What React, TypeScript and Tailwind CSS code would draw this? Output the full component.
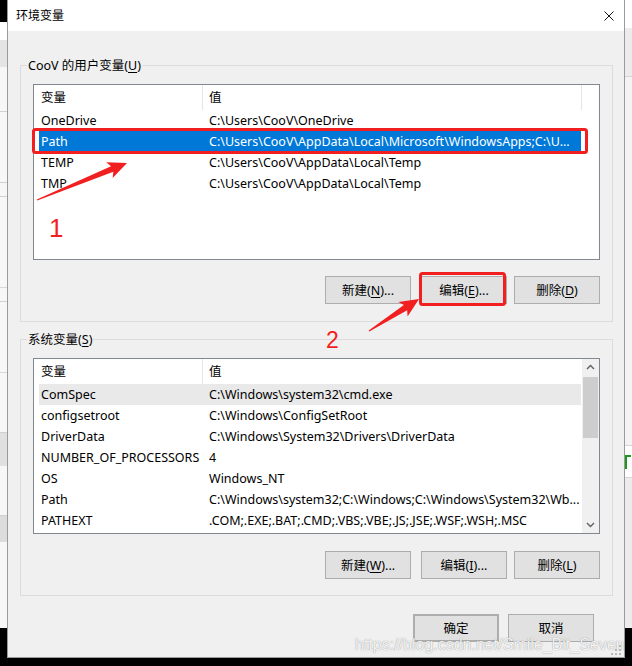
import React from 'react'

type Row = { name: string; value: string }

const USER_ROWS: Row[] = [
  { name: 'OneDrive', value: 'C:\\Users\\CooV\\OneDrive' },
  { name: 'Path', value: 'C:\\Users\\CooV\\AppData\\Local\\Microsoft\\WindowsApps;C:\\U...' },
  { name: 'TEMP', value: 'C:\\Users\\CooV\\AppData\\Local\\Temp' },
  { name: 'TMP', value: 'C:\\Users\\CooV\\AppData\\Local\\Temp' },
]

const SYSTEM_ROWS: Row[] = [
  { name: 'ComSpec', value: 'C:\\Windows\\system32\\cmd.exe' },
  { name: 'configsetroot', value: 'C:\\Windows\\ConfigSetRoot' },
  { name: 'DriverData', value: 'C:\\Windows\\System32\\Drivers\\DriverData' },
  { name: 'NUMBER_OF_PROCESSORS', value: '4' },
  { name: 'OS', value: 'Windows_NT' },
  { name: 'Path', value: 'C:\\Windows\\system32;C:\\Windows;C:\\Windows\\System32\\Wb...' },
  { name: 'PATHEXT', value: '.COM;.EXE;.BAT;.CMD;.VBS;.VBE;.JS;.JSE;.WSF;.WSH;.MSC' },
]

const RED = '#f11f1f'

function U({ c }: { c: string }) {
  return <span className="underline underline-offset-[2px]">{c}</span>
}

function Btn({ children, className = '' }: { children: React.ReactNode; className?: string }) {
  return (
    <div
      className={`flex h-[28px] w-[86px] items-center justify-center border border-[#adadad] bg-[#e1e1e1] ${className}`}
    >
      {children}
    </div>
  )
}

function Header({ filler }: { filler: boolean }) {
  return (
    <div className="flex h-[25px] bg-white">
      <div className="flex w-[169px] items-center border-r border-[#e5e5e5] pl-[7px]">变量</div>
      <div className={`flex w-[379px] items-center pl-[6px] ${filler ? 'border-r border-[#e5e5e5]' : ''}`}>值</div>
    </div>
  )
}

function Rows({ rows, selected, hovered }: { rows: Row[]; selected?: number; hovered?: number }) {
  return (
    <div className="ml-[5px] w-[542px]">
      {rows.map((r, i) => (
        <div
          key={r.name + i}
          className={`flex h-[21px] items-center whitespace-nowrap ${
            i === selected ? 'bg-[#0078d7] text-white' : i === hovered ? 'bg-[#e9e9e9]' : ''
          }`}
        >
          <div className="w-[170px] overflow-hidden pl-[2px]">{r.name}</div>
          <div className="flex-1 overflow-hidden">{r.value}</div>
        </div>
      ))}
    </div>
  )
}

function Chevron({ down }: { down?: boolean }) {
  return (
    <svg width="17" height="17" viewBox="0 0 17 17">
      <polyline
        points={down ? '5,7 8.5,10.5 12,7' : '5,10 8.5,6.5 12,10'}
        fill="none"
        stroke="#606060"
        strokeWidth="1.4"
      />
    </svg>
  )
}

function GroupBox({ label, children }: { label: React.ReactNode; children: React.ReactNode }) {
  return (
    <div className="h-[257px] border border-[#dcdcdc]">
      <div className="-mt-[9px] ml-[6px] w-fit bg-[#f0f0f0] px-[1px] leading-[17px]">{label}</div>
      {children}
    </div>
  )
}

function Dialog() {
  return (
    <div className="flex h-[658px] w-[618px] flex-col border-x border-b border-[#9a9a9a] bg-[#f0f0f0]">
      <div className="flex h-[31px] items-center justify-between bg-white pl-[8px] pr-[10px] text-[12px]">
        <span>环境变量</span>
        <svg width="10" height="10" viewBox="0 0 10 10">
          <path d="M0.5 0.5 L9.5 9.5 M9.5 0.5 L0.5 9.5" stroke="#111" strokeWidth="1" />
        </svg>
      </div>

      <div className="flex flex-1 flex-col pl-[12px] pr-[11px] pt-[34px]">
        <GroupBox
          label={
            <>
              CooV 的用户变量(<U c="U" />)
            </>
          }
        >
          <div className="ml-[12px] mt-[10px] h-[176px] w-[567px] border border-[#828790] bg-white">
            <Header filler />
            <Rows rows={USER_ROWS} selected={1} />
          </div>
          <div className="mr-[12px] mt-[16px] flex justify-end">
            <Btn>
              新建(<U c="N" />)...
            </Btn>
            <Btn className="ml-[10px]">
              编辑(<U c="E" />)...
            </Btn>
            <Btn className="ml-[7px]">
              删除(<U c="D" />)
            </Btn>
          </div>
        </GroupBox>

        <div className="mt-[17px]">
          <GroupBox
            label={
              <>
                系统变量(<U c="S" />)
              </>
            }
          >
            <div className="ml-[12px] mt-[10px] flex h-[176px] w-[567px] border border-[#828790] bg-white">
              <div className="w-[548px]">
                <Header filler={false} />
                <Rows rows={SYSTEM_ROWS} hovered={0} />
              </div>
              <div className="flex w-[17px] flex-col bg-[#f0f0f0]">
                <Chevron />
                <div className="mx-[1px] mt-[1px] h-[61px] bg-[#cdcdcd]" />
                <div className="flex-1" />
                <Chevron down />
              </div>
            </div>
            <div className="mr-[12px] mt-[17px] flex justify-end">
              <Btn>
                新建(<U c="W" />)...
              </Btn>
              <Btn className="ml-[10px]">
                编辑(<U c="I" />)...
              </Btn>
              <Btn className="ml-[7px]">
                删除(<U c="L" />)
              </Btn>
            </div>
          </GroupBox>
        </div>

        <div className="mr-[19px] mt-[18px] flex justify-end">
          <Btn className="border-2 border-[#0078d7]">确定</Btn>
          <Btn className="ml-[9px]">取消</Btn>
        </div>
      </div>
    </div>
  )
}

function LeftStrip() {
  return (
    <div className="flex h-[628px] w-[7px] flex-col bg-[#f7f7f7]">
      <div className="h-[22px] bg-black" />
      <div className="h-[18px] bg-white" />
      <div className="h-[27px] bg-[#e4e4e4]" />
      <div className="h-[45px] border-b border-[#d0d0d0]" />
      <div className="h-[71px] border-b border-[#d0d0d0]" />
      <div className="h-[14px] border-b border-[#d0d0d0]" />
      <div className="h-[91px] border-b border-[#d8d8d8]" />
      <div className="h-[14px] border-b border-[#d0d0d0]" />
      <div className="h-[71px] border-b border-[#d8d8d8]" />
      <div className="h-[60px] border-b border-[#d0d0d0]" />
      <div className="h-[33px] bg-[#e0e0e0]" />
      <div className="h-[50px] border-b border-[#d0d0d0]" />
      <div className="h-[26px] bg-[#dcdcdc]" />
    </div>
  )
}

function RightStrip() {
  return (
    <div className="flex h-[628px] w-[7px] flex-col overflow-hidden bg-[#ececec]">
      <div className="h-[28px] bg-white" />
      <div className="h-[49px] border-b border-[#d4d4d4]" />
      <div className="h-[369px] border-b border-[#d4d4d4] bg-[#f3f3f3]" />
      <div className="flex h-[31px] items-center bg-white">
        <div className="h-[14px] w-[6px] border-l-2 border-t-2 border-[#1a9a1a]" />
      </div>
      <div className="flex-1 border-t border-[#d4d4d4]" />
    </div>
  )
}

function Arrow({ x, y, tx, ty }: { x: number; y: number; tx: number; ty: number }) {
  const L = Math.hypot(tx - x, ty - y)
  const a = (Math.atan2(ty - y, tx - x) * 180) / Math.PI
  const pts = `0,-0.6 ${L - 16},-3 ${L - 19},-8.5 ${L},0 ${L - 19},8.5 ${L - 16},3 0,0.6`
  return (
    <g transform={`translate(${x} ${y}) rotate(${a})`}>
      <polygon points={pts} fill={RED} />
    </g>
  )
}

function Overlay() {
  return (
    <>
      <svg className="pointer-events-none absolute left-0 top-0" width="632" height="666" viewBox="0 0 632 666">
        <rect x="33.5" y="129.5" width="553" height="23" rx="2" fill="none" stroke={RED} strokeWidth="3" />
        <rect x="420.5" y="273.5" width="84" height="31" rx="2" fill="none" stroke={RED} strokeWidth="3" />
        <Arrow x={37} y={200} tx={127} ty={163} />
        <Arrow x={369} y={331} tx={419} ty={299} />
        <text x="49" y="237" fill={RED} fontSize="26" fontFamily="'Liberation Sans', Arial, sans-serif">
          1
        </text>
        <text x="326" y="348" fill={RED} fontSize="23" fontFamily="'Liberation Sans', Arial, sans-serif">
          2
        </text>
        <g fill="#b8b8b8">
          <rect x="619" y="645" width="2" height="2" />
          <rect x="619" y="649" width="2" height="2" />
          <rect x="615" y="649" width="2" height="2" />
          <rect x="619" y="653" width="2" height="2" />
          <rect x="615" y="653" width="2" height="2" />
          <rect x="611" y="653" width="2" height="2" />
        </g>
      </svg>
      <div className="pointer-events-none absolute left-[355px] top-[637px] whitespace-nowrap font-['Liberation_Sans',Arial,sans-serif] text-[16px] leading-[16px] text-white/90 [text-shadow:0_0_1px_rgba(90,90,90,0.8)]">
        https://blog.csdn.net/Smile_Bit_Seven
      </div>
    </>
  )
}

export default function App() {
  return (
    <div className="relative flex h-[666px] w-[632px] overflow-hidden bg-black font-['Noto_Sans','Noto_Sans_CJK_SC',sans-serif] text-[12.5px] leading-[17px] text-black">
      <LeftStrip />
      <Dialog />
      <RightStrip />
      <Overlay />
    </div>
  )
}
